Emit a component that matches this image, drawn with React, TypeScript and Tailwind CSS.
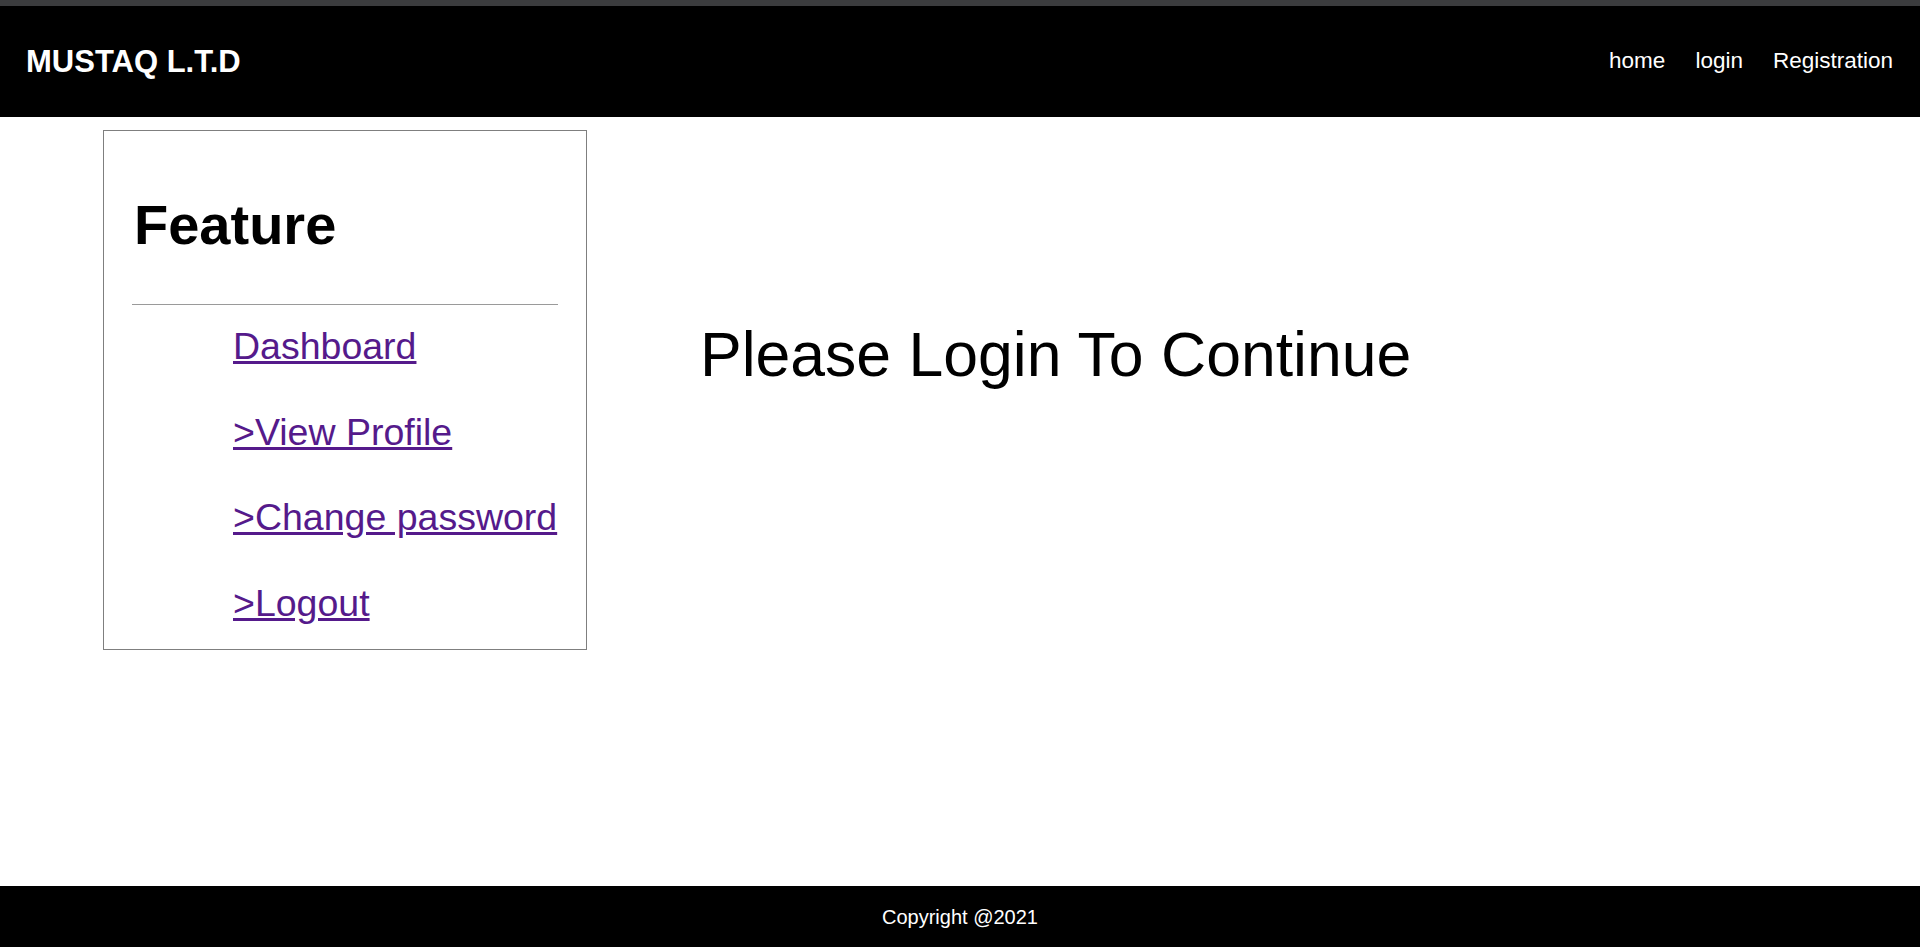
const links = ["Dashboard", ">View Profile", ">Change password", ">Logout"];

export default function App() {
  return (
    <div className="flex min-h-screen flex-col bg-white font-['Liberation_Sans',Arial,sans-serif] text-black">
      <div className="h-[6px] bg-[#3b3c3e]" />
      <header className="flex h-[111px] items-center justify-between bg-black pl-[26px] pr-[27px] text-white">
        <h1 className="text-[31px] font-bold leading-none">MUSTAQ L.T.D</h1>
        <nav className="flex items-center gap-[30px] text-[22.5px] leading-none">
          <a href="#">home</a>
          <a href="#">login</a>
          <a href="#">Registration</a>
        </nav>
      </header>

      <main className="flex flex-1 items-start">
        <aside className="ml-[103px] mt-[13px] h-[520px] w-[484px] border border-[#7f7f7f] px-[28px] pt-[62px]">
          <h2 className="ml-[2px] text-[56px] font-bold leading-[64px]">Feature</h2>
          <hr className="mt-[47px] border-0 border-t border-[#9a9a9a]" />
          <ul className="mt-[20px] flex flex-col gap-[42.7px] pl-[101px]">
            {links.map((l) => (
              <li key={l} className="whitespace-nowrap text-[37.5px] leading-[43px]">
                <a href="#" className="text-[#551a8b] underline">
                  {l}
                </a>
              </li>
            ))}
          </ul>
        </aside>
        <div className="ml-[113px] mt-[201px]">
          <p className="text-[62.5px] leading-[72px]">Please Login To Continue</p>
        </div>
      </main>

      <footer className="flex h-[61px] items-center justify-center bg-black text-[20px] text-white">
        Copyright @2021
      </footer>
    </div>
  );
}
